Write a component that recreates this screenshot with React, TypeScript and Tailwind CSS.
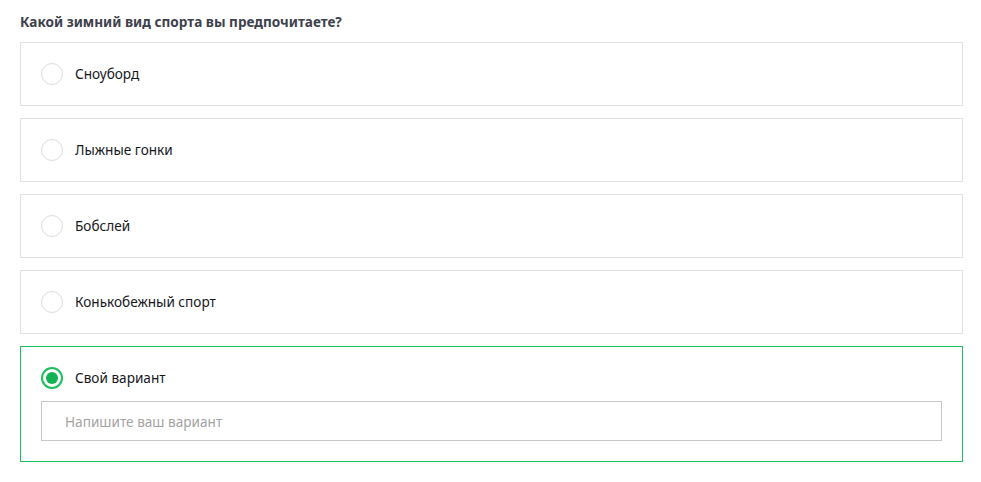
import React, { useState } from "react";

const Poll = () => {
  const options = ["Сноуборд", "Лыжные гонки", "Бобслей", "Конькобежный спорт"];
  const [picked, setPicked] = useState("custom");

  return (
    <div className="w-full bg-white pl-5 pr-[18px] pt-3 pb-5 font-['Noto_Sans',sans-serif]">
      <h3 className="text-[13.6px] leading-5 font-bold text-[#3d424c] mb-[10px]">
        Какой зимний вид спорта вы предпочитаете?
      </h3>
      <div className="flex flex-col gap-3">
        {options.map((o) => (
          <label
            key={o}
            className="flex items-center gap-3 border border-[#e2e2e2] p-5 cursor-pointer"
            onClick={() => setPicked(o)}
          >
            <span
              className={
                picked === o
                  ? "w-[22px] h-[22px] rounded-full border-2 border-[#1cbf5c] grid place-items-center"
                  : "w-[22px] h-[22px] rounded-full border border-[#dedede]"
              }
            >
              {picked === o && <span className="w-3 h-3 rounded-full bg-[#12b352]" />}
            </span>
            <span className="text-[13.6px] leading-[22px] text-[#16181d]">{o}</span>
          </label>
        ))}
        <div
          className={
            picked === "custom"
              ? "border border-[#1cbf5c] p-5 flex flex-col gap-3"
              : "border border-[#e2e2e2] p-5 flex flex-col gap-3"
          }
        >
          <label className="flex items-center gap-3 cursor-pointer" onClick={() => setPicked("custom")}>
            <span
              className={
                picked === "custom"
                  ? "w-[22px] h-[22px] rounded-full border-2 border-[#1cbf5c] grid place-items-center"
                  : "w-[22px] h-[22px] rounded-full border border-[#dedede]"
              }
            >
              {picked === "custom" && <span className="w-3 h-3 rounded-full bg-[#12b352]" />}
            </span>
            <span className="text-[13.6px] leading-[22px] text-[#16181d]">Свой вариант</span>
          </label>
          <input
            className="h-10 w-full border border-[#c8c8c8] px-[23px] text-[13.6px] text-[#333] placeholder:text-[#a3a3a3] outline-none"
            placeholder="Напишите ваш вариант"
          />
        </div>
      </div>
    </div>
  );
};

export default function App() {
  return <Poll />;
}
